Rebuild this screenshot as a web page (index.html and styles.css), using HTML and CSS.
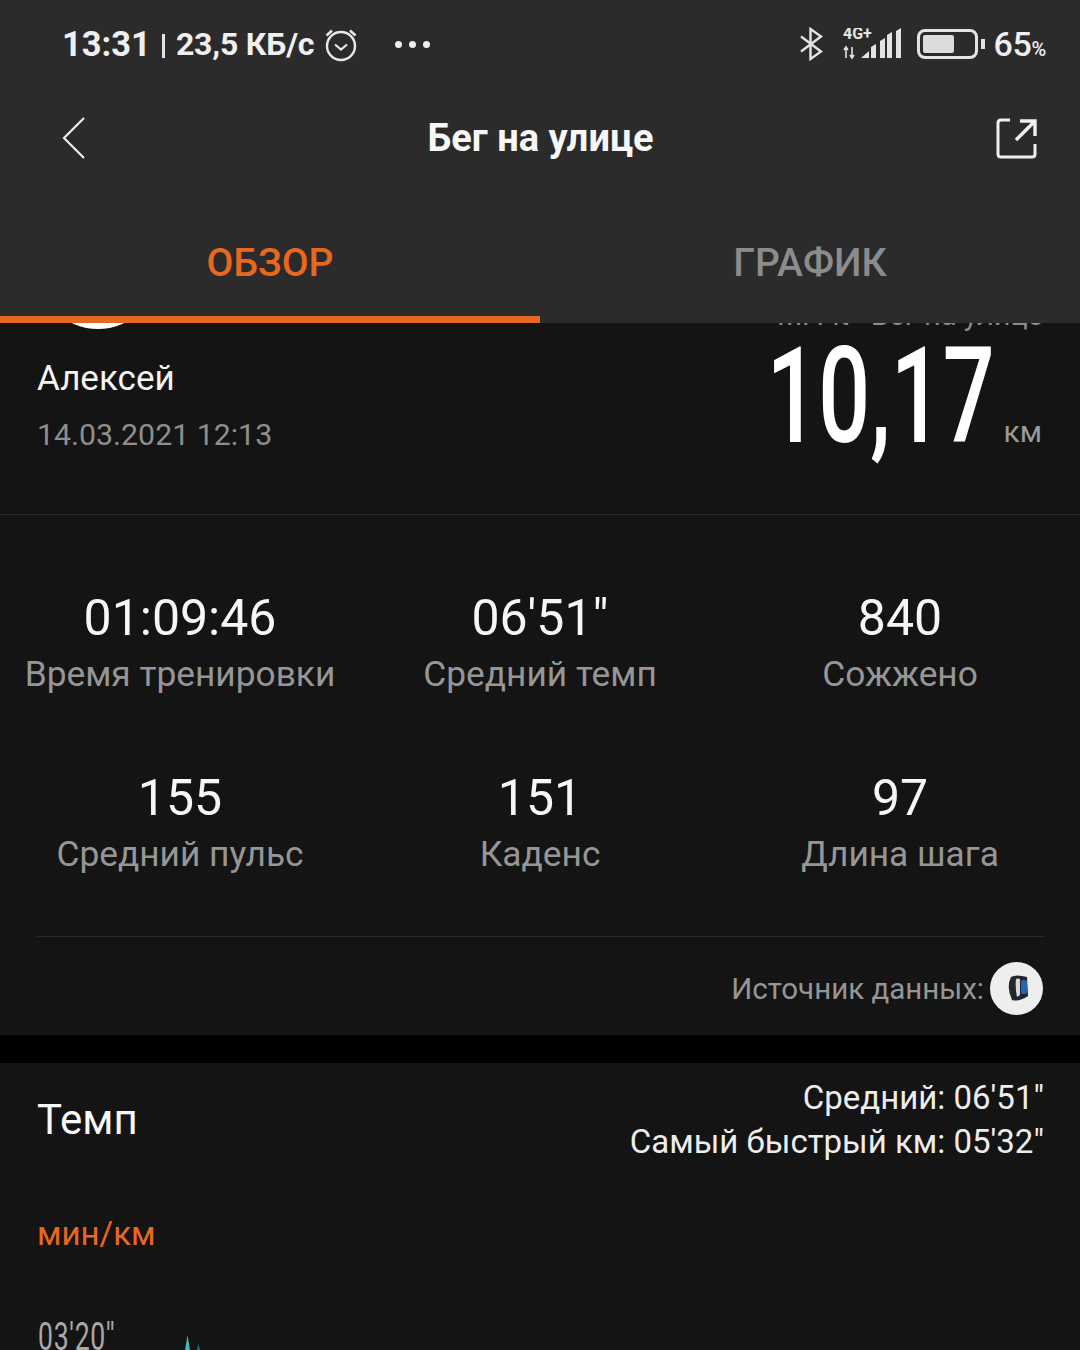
FILE: index.html
```html
<!DOCTYPE html>
<html lang="ru">
<head>
  <meta charset="UTF-8">
  <title>Бег на улице</title>
  <link rel="stylesheet" href="styles.css">
</head>
<body>
  <header class="app-header">
    <div class="status-bar">
      <div class="status-left">
        <span class="status-time">13:31</span>
        <span class="status-sep"></span>
        <span class="status-speed">23,5 КБ/с</span>
        <svg class="alarm-icon" width="36" height="36" viewBox="0 0 36 36" fill="none" stroke="#e8e8e8">
          <circle cx="18" cy="20" r="14" stroke-width="2.4"/>
          <path d="M12 18.5l6 5 6-5" stroke-width="2.2"/>
          <path d="M3.5 9.5L9 4.5M32.5 9.5L27 4.5" stroke-width="2.6"/>
        </svg>
        <span class="status-dots"><i></i><i></i><i></i></span>
      </div>
      <div class="status-right">
        <svg width="24" height="34" viewBox="0 0 24 34" fill="none" stroke="#e4e4e4" stroke-width="2.4">
          <path d="M2 9.5L22 24.5L11.5 32V2L22 9.5L2 24.5"/>
        </svg>
        <svg class="signal-icon" width="60" height="32" viewBox="0 0 60 32">
          <text x="1" y="11" class="signal-label">4G+</text>
          <path d="M4 19v11M2 22l2-3 2 3M10 19v11M8 27l2 3 2-3" stroke="#e4e4e4" stroke-width="1.6" fill="none"/>
          <path d="M19 30L27 23V30zM29 30V19L34 16V30zM38 30V13L43 10V30zM45 30V7L50 4V30zM54 30V3L59 0V30z" fill="#e4e4e4"/>
        </svg>
        <div class="battery">
          <div class="battery-body"><div class="battery-fill"></div></div>
          <div class="battery-cap"></div>
        </div>
        <span class="battery-pct">65<small>%</small></span>
      </div>
    </div>
    <nav class="nav-bar">
      <svg width="26" height="44" viewBox="0 0 26 44" fill="none" stroke="#f0f0f0" stroke-width="2.2">
        <path d="M23 2L3 22l20 20"/>
      </svg>
      <h1 class="nav-title">Бег на улице</h1>
      <svg width="42" height="42" viewBox="0 0 42 42" fill="none" stroke="#f0f0f0" stroke-width="3">
        <path d="M14 3H5Q2 3 2 6V37Q2 40 5 40H36Q39 40 39 37V27"/>
        <path d="M20 23L38 5M24 4H39V19" stroke-width="3.4"/>
      </svg>
    </nav>
    <div class="tabs">
      <div class="tab tab-active">ОБЗОР</div>
      <div class="tab">ГРАФИК</div>
    </div>
  </header>

  <main>
    <section class="panel">
      <div class="summary">
        <div class="avatar"></div>
        <div class="clipped-title">Mi Fit · Бег на улице</div>
        <div class="athlete">
          <div class="athlete-name">Алексей</div>
          <div class="athlete-date">14.03.2021 12:13</div>
        </div>
        <div class="distance">
          <span class="distance-value">10,17</span>
          <span class="distance-unit">км</span>
        </div>
      </div>
      <div class="stats">
        <div class="stat"><div class="stat-value">01:09:46</div><div class="stat-label">Время тренировки</div></div>
        <div class="stat"><div class="stat-value">06'51"</div><div class="stat-label">Средний темп</div></div>
        <div class="stat"><div class="stat-value">840</div><div class="stat-label">Сожжено</div></div>
        <div class="stat"><div class="stat-value">155</div><div class="stat-label">Средний пульс</div></div>
        <div class="stat"><div class="stat-value">151</div><div class="stat-label">Каденс</div></div>
        <div class="stat"><div class="stat-value">97</div><div class="stat-label">Длина шага</div></div>
      </div>
      <div class="source">
        <span class="source-label">Источник данных:</span>
        <div class="source-badge">
          <svg width="26" height="32" viewBox="0 0 26 32">
            <path d="M7 5Q12 2 23 5L24 24Q15 30 8 28Q2 15 7 5Z" fill="#23272b"/>
            <path d="M12 7Q14 6 16 7V23L13 25Q11 15 12 7Z" fill="#d6d9db"/>
            <rect x="17" y="8" width="6" height="14" rx="2" fill="#2467ad"/>
          </svg>
        </div>
      </div>
    </section>

    <section class="panel tempo">
      <div class="tempo-head">
        <div class="tempo-title">Темп</div>
        <div class="tempo-info">
          <div>Средний: 06'51"</div>
          <div>Самый быстрый км: 05'32"</div>
        </div>
      </div>
      <div class="tempo-unit">мин/км</div>
      <div class="chart">
        <span class="chart-tick">03'20''</span>
        <svg class="chart-line" width="24" height="16" viewBox="0 0 24 16">
          <path d="M4 16L6.5 1L9 16Z" fill="#46b7bd"/>
          <path d="M16 16L17.5 10L19 16Z" fill="#2a6f73"/>
        </svg>
      </div>
    </section>
  </main>
</body>
</html>
```

FILE: styles.css
```css
html, body {
  margin: 0;
  height: 1350px;
  overflow: hidden;
}
body {
  background-color: #000;
  font-family: Roboto, "Liberation Sans", sans-serif;
  color: #fff;
}

/* header */
.app-header {
  position: relative;
  z-index: 2;
  height: 323px;
  background-color: #2b2b2b;
  display: flex;
  flex-direction: column;
}
.status-bar {
  height: 88px;
  padding: 0 34px 0 62px;
  display: flex;
  justify-content: space-between;
  align-items: center;
}
.status-left, .status-right {
  display: flex;
  align-items: center;
}
.status-time {
  font-size: 34.5px;
  font-weight: 700;
  color: #efefef;
}
.status-sep {
  width: 3px;
  height: 24px;
  margin: 4px 11px 0 11px;
  background-color: #e4e4e4;
}
.status-speed {
  font-size: 32px;
  font-weight: 700;
  letter-spacing: -0.2px;
  color: #efefef;
}
.alarm-icon {
  margin-left: 9px;
}
.status-dots {
  display: flex;
  gap: 7px;
  margin-left: 36px;
}
.status-dots i {
  width: 7px;
  height: 7px;
  border-radius: 50%;
  background-color: #efefef;
}
.signal-icon {
  margin-left: 19px;
}
.signal-label {
  font-size: 16px;
  font-weight: 700;
  fill: #e4e4e4;
}
.battery {
  display: flex;
  align-items: center;
  margin-left: 15px;
}
.battery-body {
  width: 49px;
  height: 18px;
  padding: 3px;
  border: 3px solid #e4e4e4;
  border-radius: 8px;
}
.battery-fill {
  width: 65%;
  height: 100%;
  background-color: #dcdcdc;
  border-radius: 2px;
}
.battery-cap {
  width: 4px;
  height: 10px;
  margin-left: 3px;
  background-color: #e4e4e4;
}
.battery-pct {
  margin-left: 9px;
  font-size: 34px;
  font-weight: 500;
  letter-spacing: -0.3px;
  color: #efefef;
}
.battery-pct small {
  font-size: 20px;
  font-weight: 500;
}
.nav-bar {
  height: 100px;
  padding: 0 42px 0 61px;
  display: flex;
  justify-content: space-between;
  align-items: center;
}
.nav-title {
  margin: 0 2px 0 0;
  font-size: 38px;
  font-weight: 700;
  color: #f7f7f7;
}
.tabs {
  margin-top: auto;
  height: 135px;
  display: flex;
}
.tab {
  flex: 1;
  padding-top: 52px;
  box-sizing: border-box;
  text-align: center;
  font-size: 39px;
  font-weight: 500;
  color: #8c8c8c;
}
.tab-active {
  color: #e8681f;
  border-bottom: 7px solid #e8681f;
}

/* panels */
.panel {
  background-color: #141414;
}
.summary {
  position: relative;
  height: 191px;
  border-bottom: 1px solid #2a2a2a;
  overflow: hidden;
  display: flex;
  justify-content: space-between;
}
.avatar {
  position: absolute;
  left: 38px;
  top: -114px;
  width: 120px;
  height: 120px;
  border-radius: 50%;
  background-color: #fff;
}
.clipped-title {
  position: absolute;
  right: 37px;
  top: -25px;
  font-size: 29px;
  color: #8c8c8c;
}
.athlete {
  padding: 36px 0 0 37px;
}
.athlete-name {
  font-size: 35px;
  line-height: 40px;
  color: #f4f4f4;
}
.athlete-date {
  margin-top: 16px;
  font-size: 30.3px;
  line-height: 40px;
  color: #8e8e8e;
}
.distance {
  display: flex;
  align-items: baseline;
  padding: 0 38px 0 0;
  height: 148px;
}
.distance-value {
  display: inline-block;
  font-size: 134px;
  font-weight: 500;
  line-height: 148px;
  transform: scaleX(0.682);
  transform-origin: right;
  margin-right: 9px;
}
.distance-unit {
  font-size: 30px;
  color: #9a9a9a;
}

/* stats */
.stats {
  padding: 73px 0 58px;
  display: grid;
  grid-template-columns: repeat(3, 360px);
  row-gap: 69px;
  position: relative;
}
.stats::after {
  content: "";
  position: absolute;
  left: 37px;
  right: 36px;
  bottom: 0;
  height: 1px;
  background-color: #2a2a2a;
}
.stat {
  text-align: center;
}
.stat-value {
  font-size: 50px;
  line-height: 60px;
  color: #f7f7f7;
}
.stat-label {
  margin-top: 1px;
  font-size: 35.3px;
  line-height: 50px;
  color: #969696;
}
.source {
  height: 94px;
  padding: 4px 37px 0 0;
  display: flex;
  justify-content: flex-end;
  align-items: center;
  gap: 6px;
}
.source-label {
  margin-top: 2px;
  font-size: 29.5px;
  color: #969696;
}
.source-badge {
  width: 53px;
  height: 53px;
  border-radius: 50%;
  background-color: #eeeeee;
  display: flex;
  justify-content: center;
  align-items: center;
}

/* tempo */
.tempo {
  margin-top: 28px;
  height: 287px;
  overflow: hidden;
}
.tempo-head {
  padding: 13px 36px 0 37px;
  display: flex;
  justify-content: space-between;
}
.tempo-title {
  padding-top: 19px;
  font-size: 42px;
  line-height: 50px;
  color: #f7f7f7;
}
.tempo-info {
  text-align: right;
  font-size: 33px;
  line-height: 44px;
  color: #ededed;
}
.tempo-unit {
  margin: 50px 0 0 37px;
  font-size: 33px;
  line-height: 40px;
  color: #e8681f;
}
.chart {
  position: relative;
  margin-top: 63px;
}
.chart-tick {
  display: inline-block;
  margin-left: 38px;
  font-size: 38px;
  line-height: 40px;
  letter-spacing: 1px;
  color: #a8a8a8;
  transform: scaleX(0.7);
  transform-origin: left;
}
.chart-line {
  position: absolute;
  left: 181px;
  top: 17px;
}
```
